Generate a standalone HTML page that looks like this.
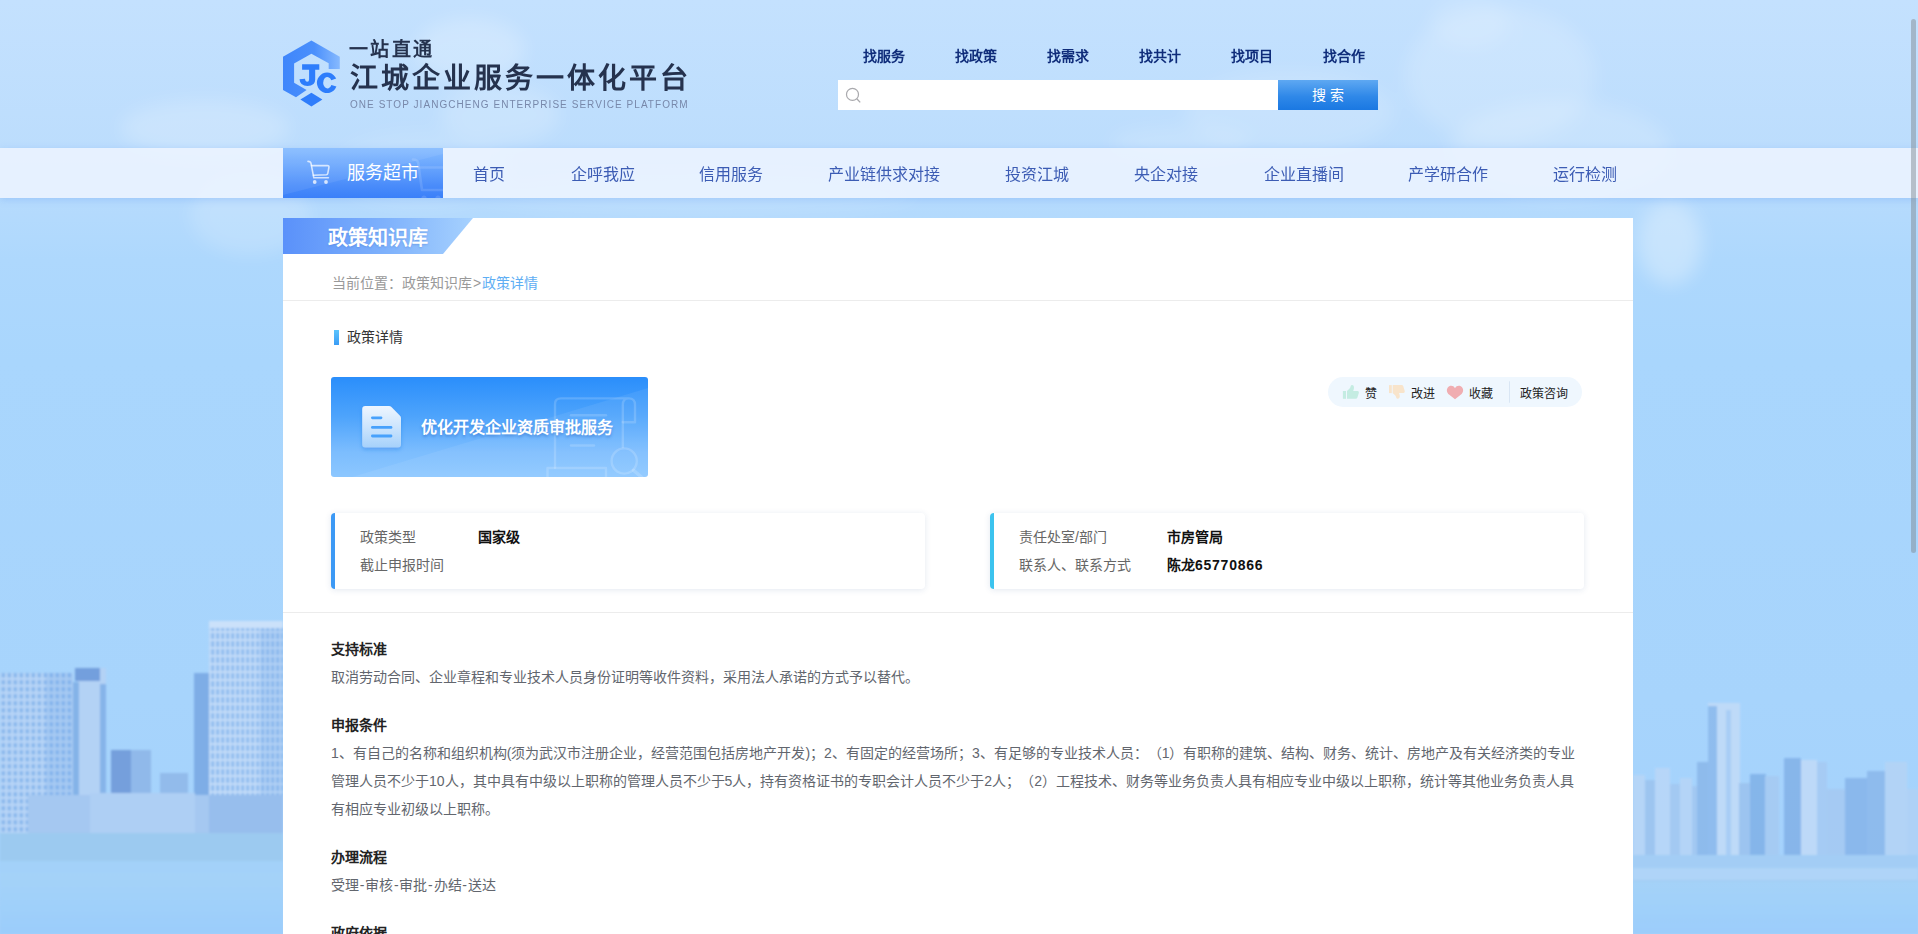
<!DOCTYPE html>
<html lang="zh-CN">
<head>
<meta charset="utf-8">
<title>政策详情</title>
<style>
*{box-sizing:border-box;margin:0;padding:0}
u{text-decoration:none;padding:0 0.75px}
html,body{width:1918px;height:934px;overflow:hidden}
body{font-family:"Liberation Sans",sans-serif;position:relative;color:#333;text-spacing-trim:space-all;
 background:linear-gradient(180deg,#c4e1fe 0px,#bcddfd 150px,#aed8fd 260px,#a9d6fd 360px,#a7d4fc 700px,#a3d1fc 934px)}
.abs{position:absolute}
#bg{position:absolute;left:0;top:0;width:1918px;height:934px}
/* header */
.t1{left:349px;top:38px;font-size:19px;line-height:24px;font-weight:bold;color:#25324e;letter-spacing:2.4px;white-space:nowrap}
.t2{left:350px;top:60px;font-size:28px;line-height:38px;font-weight:bold;color:#25324e;letter-spacing:3px;white-space:nowrap}
.t3{left:350px;top:99px;font-size:10px;line-height:12px;color:#7888aa;letter-spacing:1.05px;white-space:nowrap}
.toplink{top:46px;font-size:14px;line-height:20px;font-weight:bold;color:#0f2c7a;white-space:nowrap}
.search{left:838px;top:80px;width:440px;height:30px;background:#fff}
.sbtn{left:1278px;top:80px;width:100px;height:30px;background:linear-gradient(180deg,#5ea8f2 0%,#2f88e8 55%,#1a78e2 100%);color:#fff;font-size:14px;line-height:31px;text-align:center;letter-spacing:0}
/* nav */
.navbar{left:0;top:148px;width:1918px;height:50px;background:rgba(237,245,255,0.86);box-shadow:0 2px 7px rgba(90,150,240,0.28)}
.navbtn{left:283px;top:148px;width:160px;height:50px;background:linear-gradient(180deg,#86bcff 0%,#66a3fd 40%,#4a8cfa 75%,#3a80f9 100%);overflow:hidden}
.navbtn .txt{position:absolute;left:64px;top:12px;font-size:18px;line-height:26px;color:#fff;white-space:nowrap}
.nav{top:162px;font-size:16px;line-height:26px;color:#3c5cb4;white-space:nowrap}
/* panel */
.panel{left:283px;top:218px;width:1350px;height:720px;background:#fff}
.tab{left:283px;top:218px;width:190px;height:36px;background:linear-gradient(90deg,#5a91fa 0%,#7fb2fc 55%,#a6d1fe 100%);clip-path:polygon(0 0,190px 0,160px 36px,0 36px)}
.tabtxt{left:328px;top:224px;font-size:20px;line-height:28px;font-weight:bold;color:#fff;white-space:nowrap;text-shadow:0 1px 2px rgba(60,110,200,0.35)}
.crumb{left:332px;top:273px;font-size:14px;line-height:20px;color:#999;white-space:nowrap}
.crumb span{color:#5eaef4}
.hr{left:283px;width:1350px;height:1px;background:#ececec}
.secbar{left:334px;top:330px;width:5px;height:15px;background:linear-gradient(180deg,#5cc4fd,#3a9cf5)}
.sectxt{left:347px;top:327px;font-size:14px;line-height:20px;color:#333;white-space:nowrap}
.banner{left:331px;top:377px;width:317px;height:100px;border-radius:3px;overflow:hidden;background:linear-gradient(180deg,#2a8efb 0%,#4ea4fc 40%,#7cbdfe 75%,#8cc7ff 100%)}
.bantxt{left:421px;top:415px;font-size:16px;line-height:26px;font-weight:bold;color:#fff;white-space:nowrap;text-shadow:0 2px 3px rgba(30,90,190,0.45)}
.pill{left:1328px;top:377px;width:254px;height:30px;border-radius:15px;background:#eff7fe}
.ptxt{top:385px;font-size:12px;line-height:18px;color:#222;white-space:nowrap}
.card{top:513px;width:594px;height:76px;background:#fff;border-radius:4px;box-shadow:0 1px 6px rgba(40,80,140,0.13)}
.card i{position:absolute;left:0;top:0;width:4px;height:76px;border-radius:4px 0 0 4px}
.lab{font-size:14px;line-height:28px;color:#666;white-space:nowrap}
.val{font-size:14px;line-height:28px;color:#111;font-weight:bold;white-space:nowrap}
.h{left:331px;font-size:14px;line-height:28px;font-weight:bold;color:#222;white-space:nowrap}
.p{left:331px;font-size:14px;line-height:28px;color:#62666e;white-space:nowrap}
.scroll{left:1911px;top:19px;width:5px;height:534px;border-radius:3px;background:rgba(128,136,144,0.48)}
</style>
</head>
<body>
<svg id="bg" viewBox="0 0 1918 934">
 <defs>
  <filter id="cb" x="-20%" y="-20%" width="140%" height="140%"><feGaussianBlur stdDeviation="9"/></filter>
  <filter id="cb2" x="-20%" y="-20%" width="140%" height="140%"><feGaussianBlur stdDeviation="5"/></filter>
  <filter id="sb" x="-5%" y="-5%" width="110%" height="110%"><feGaussianBlur stdDeviation="0.9"/></filter>
  <pattern id="win" width="6" height="7" patternUnits="userSpaceOnUse"><rect width="6" height="7" fill="#b9d6f7"/><rect x="1.5" y="1" width="3.6" height="4.6" fill="#8ab8ed"/></pattern>
  <pattern id="win2" width="5" height="8" patternUnits="userSpaceOnUse"><rect width="5" height="8" fill="#c4ddf9"/><rect x="1.2" y="1" width="3" height="6" fill="#8fbcef"/></pattern>
  <linearGradient id="wat" x1="0" y1="0" x2="0" y2="1"><stop offset="0" stop-color="#a5d3f8"/><stop offset="1" stop-color="#9bcdfb"/></linearGradient>
 </defs>
 <!-- clouds -->
 <g fill="#fff" filter="url(#cb)">
  <ellipse cx="205" cy="128" rx="85" ry="28" opacity="0.20"/>
  <ellipse cx="250" cy="215" rx="60" ry="40" opacity="0.16"/>
  <ellipse cx="470" cy="50" rx="55" ry="32" opacity="0.22"/>
  <ellipse cx="500" cy="115" rx="60" ry="30" opacity="0.18"/>
  <ellipse cx="420" cy="170" rx="90" ry="40" opacity="0.10"/>
  <ellipse cx="1290" cy="112" rx="105" ry="40" opacity="0.14"/>
  <ellipse cx="1180" cy="142" rx="70" ry="16" opacity="0.14"/>
  <ellipse cx="1500" cy="75" rx="95" ry="68" opacity="0.16"/>
  <ellipse cx="1470" cy="22" rx="40" ry="26" opacity="0.12"/>
  <ellipse cx="1560" cy="150" rx="110" ry="50" opacity="0.16"/>
  <ellipse cx="1670" cy="243" rx="32" ry="42" opacity="0.30"/>
  <ellipse cx="700" cy="195" rx="220" ry="22" opacity="0.10"/>
 </g>
 <!-- left skyline -->
 <g filter="url(#sb)">
  <rect x="0" y="673" width="73" height="160" fill="url(#win)"/>
  <rect x="46" y="673" width="27" height="160" fill="rgba(110,165,230,0.22)"/>
  <rect x="78" y="668" width="28" height="130" fill="#b3d2f5"/>
  <rect x="73" y="682" width="6" height="116" fill="#84b3e8"/>
  <rect x="75" y="668" width="25" height="13" fill="#739fdd"/>
  <rect x="100" y="684" width="6" height="114" fill="#86b4e9"/>
  <rect x="111" y="750" width="20" height="46" fill="#749fdc"/>
  <rect x="131" y="750" width="20" height="46" fill="#90b9ea"/>
  <rect x="160" y="773" width="28" height="23" fill="#92bbeb"/>
  <rect x="194" y="673" width="16" height="160" fill="#7eade6"/>
  <rect x="209" y="621" width="74" height="214" fill="url(#win2)"/>
  <rect x="260" y="629" width="23" height="206" fill="rgba(110,165,230,0.20)"/>
  <rect x="209" y="621" width="74" height="7" fill="#cbe1fa"/>
  <rect x="28" y="795" width="255" height="40" fill="#a5c8f1"/>
  <rect x="90" y="793" width="105" height="40" fill="#aecff4"/>
  <rect x="209" y="795" width="74" height="40" fill="rgba(120,170,230,0.30)"/>
  <rect x="0" y="833" width="283" height="30" fill="#9ccaf0"/>
  <rect x="0" y="861" width="283" height="14" fill="#a3d1f9"/>
  <rect x="0" y="873" width="283" height="61" fill="url(#wat)"/>
 </g>
 <!-- right skyline -->
 <g filter="url(#sb)" opacity="0.85">
  <rect x="1633" y="775" width="12" height="82" fill="#b8d6f7"/>
  <rect x="1645" y="780" width="10" height="77" fill="#9cc3ef"/>
  <rect x="1655" y="768" width="15" height="89" fill="#bad7f8"/>
  <rect x="1670" y="784" width="10" height="73" fill="#a3c8f1"/>
  <rect x="1680" y="778" width="12" height="79" fill="#b7d5f7"/>
  <rect x="1692" y="786" width="6" height="71" fill="#a2c7f1"/>
  <rect x="1697" y="762" width="12" height="95" fill="#8ab7ea"/>
  <rect x="1708" y="703" width="32" height="154" fill="#c3dcf8"/>
  <rect x="1708" y="706" width="9" height="151" fill="#8cb9ec"/>
  <rect x="1726" y="710" width="5" height="147" fill="#a9cdf4"/>
  <rect x="1739" y="783" width="11" height="74" fill="#9bc2ee"/>
  <rect x="1750" y="774" width="16" height="83" fill="#80b1e8"/>
  <rect x="1765" y="776" width="14" height="81" fill="#a6caf2"/>
  <rect x="1784" y="758" width="17" height="99" fill="#82b1e8"/>
  <rect x="1801" y="760" width="16" height="97" fill="#c2dbf8"/>
  <rect x="1817" y="762" width="10" height="95" fill="#a6caf3"/>
  <rect x="1827" y="789" width="18" height="68" fill="#a5c9f2"/>
  <rect x="1845" y="778" width="22" height="79" fill="#86b4ea"/>
  <rect x="1867" y="771" width="18" height="86" fill="#8ab7eb"/>
  <rect x="1885" y="762" width="22" height="98" fill="#b5d4f6"/>
  <rect x="1907" y="789" width="11" height="68" fill="#b0d1f5"/>
  <rect x="1633" y="855" width="285" height="28" fill="#a3cdf4"/>
  <rect x="1633" y="868" width="285" height="12" fill="#b1d5f8"/>
  <rect x="1633" y="882" width="285" height="52" fill="url(#wat)"/>
 </g>
</svg>

<!-- logo -->
<svg class="abs" style="left:0;top:0" width="700" height="130" viewBox="0 0 700 130">
 <defs><linearGradient id="lg1" x1="0" y1="0" x2="1" y2="0"><stop offset="0" stop-color="#3f86fb"/><stop offset="0.55" stop-color="#4a8ffc"/><stop offset="1" stop-color="#86b9fe"/></linearGradient></defs>
 <path d="M311.4 40.5 L339.8 56.8 L339.8 69 L328.7 69 L328.7 63.3 L311.4 53.8 L294.1 63.5 L294.1 82.7 L306.6 90 L296 97.3 L283 90 L283 56.8 Z" fill="url(#lg1)"/>
 <path d="M311.4 92.7 L322.4 99.4 L311.4 106.4 L300.4 99.4 Z" fill="#2f7dfb"/>
 <path d="M302.1 64.3 H319.3 V69.8 H315.2 V79.5 Q315.2 86 307.5 86 Q300 86 299.5 79.3 L305 78.8 Q305.3 81.8 307.3 81.8 Q309.1 81.8 309.1 79.3 V69.8 H302.1 Z" fill="#2d7dfc"/>
 <path d="M336.2 78.6 A10.1 10.25 0 1 0 336.4 86.6 L331.4 85 A4.3 5.7 0 1 1 331.3 80.2 Z" fill="#2d7dfc"/>
</svg>
<div class="abs t1">一站直通</div>
<div class="abs t2">江城企业服务一体化平台</div>
<div class="abs t3">ONE STOP JIANGCHENG ENTERPRISE SERVICE PLATFORM</div>

<div class="abs toplink" style="left:863px">找服务</div>
<div class="abs toplink" style="left:955px">找政策</div>
<div class="abs toplink" style="left:1047px">找需求</div>
<div class="abs toplink" style="left:1139px">找共计</div>
<div class="abs toplink" style="left:1231px">找项目</div>
<div class="abs toplink" style="left:1323px">找合作</div>
<div class="abs search"><svg width="30" height="30" viewBox="0 0 30 30" style="position:absolute;left:0;top:0"><circle cx="14.5" cy="14.4" r="6" fill="none" stroke="#a9a9ad" stroke-width="1.2"/><path d="M18.8 18.8 L22.2 22.4" stroke="#a9a9ad" stroke-width="1.3" fill="none"/></svg></div>
<div class="abs sbtn">搜&nbsp;索</div>

<!-- nav -->
<div class="abs navbar"></div>
<div class="abs navbtn">
 <svg width="160" height="50" viewBox="0 0 160 50" style="position:absolute;left:0;top:0">
  <path d="M0 0 H160 V6 L0 47 Z" fill="rgba(255,255,255,0.07)"/>
  <g fill="none" stroke="rgba(255,255,255,0.72)" stroke-width="1.6" stroke-linejoin="round" stroke-linecap="round">
   <path d="M25 13.4 Q27.6 13.4 28 15.4 L30.8 29.8 H45.4"/>
   <path d="M28.6 17.6 H44.4 Q46.2 17.6 45.9 19.4 L44.8 25.4 Q44.6 26.6 43.2 26.7 L30.4 27.3"/>
  </g>
  <circle cx="31.7" cy="34" r="1.9" fill="rgba(255,255,255,0.75)"/><circle cx="43" cy="34" r="1.9" fill="rgba(255,255,255,0.75)"/>
  <g fill="none" stroke="rgba(255,255,255,0.13)" stroke-width="2.6" stroke-linejoin="round" stroke-linecap="round">
   <path d="M130 11.5 Q134.5 11.5 135.2 15 L139 42 H162"/><path d="M136 19.5 H162"/>
  </g>
  <circle cx="141" cy="50" r="2.6" fill="rgba(255,255,255,0.13)"/><circle cx="155" cy="50" r="2.6" fill="rgba(255,255,255,0.13)"/>
 </svg>
 <div class="txt">服务超市</div>
</div>
<div class="abs nav" style="left:473px">首页</div>
<div class="abs nav" style="left:571px">企呼我应</div>
<div class="abs nav" style="left:699px">信用服务</div>
<div class="abs nav" style="left:828px">产业链供求对接</div>
<div class="abs nav" style="left:1005px">投资江城</div>
<div class="abs nav" style="left:1134px">央企对接</div>
<div class="abs nav" style="left:1264px">企业直播间</div>
<div class="abs nav" style="left:1408px">产学研合作</div>
<div class="abs nav" style="left:1553px">运行检测</div>

<!-- panel -->
<div class="abs panel"></div>
<div class="abs tab"></div>
<div class="abs tabtxt">政策知识库</div>
<div class="abs crumb">当前位置：政策知识库<b style="font-weight:normal;padding:0 1px 0 1px">&gt;</b><span>政策详情</span></div>
<div class="abs hr" style="top:300px"></div>
<div class="abs secbar"></div>
<div class="abs sectxt">政策详情</div>

<div class="abs banner" id="banner"><svg width="317" height="100" viewBox="331 377 317 100" style="position:absolute;left:0;top:0">
 <defs><linearGradient id="dg" x1="0" y1="0" x2="0" y2="1"><stop offset="0" stop-color="#eef6ff"/><stop offset="0.5" stop-color="#cde5fd"/><stop offset="1" stop-color="#a6d1fb"/></linearGradient>
 <filter id="ds" x="-30%" y="-30%" width="160%" height="170%"><feDropShadow dx="0" dy="2" stdDeviation="2" flood-color="#1c6fe0" flood-opacity="0.35"/></filter></defs>
 <path d="M352 477 L648 388 V477 Z" fill="rgba(255,255,255,0.07)"/>
 <g fill="none" stroke="rgba(255,255,255,0.17)" stroke-width="2.4" stroke-linejoin="round" stroke-linecap="round">
  <path d="M555 467.8 V404 Q555 398.4 561 398.4 H628.8 Q635 398.4 635 405 V422.3 H622.8 V405 Q622.8 398.4 628.8 398.4"/>
  <path d="M622.8 422 V447"/>
  <path d="M571 415.3 H606"/><path d="M571 445.5 H594"/>
  <path d="M547.5 478 V468 H606 V478"/>
  <circle cx="624.2" cy="461" r="12.6"/>
  <path d="M633.6 470.4 L646 481" stroke-width="3.4"/>
 </g>
 <path d="M365.4 406 H389 Q390.4 406 391.4 407 L400 415.8 Q401 416.8 401 418.2 V444.2 Q401 447.4 397.8 447.4 H365.4 Q362.2 447.4 362.2 444.2 V409.2 Q362.2 406 365.4 406 Z" fill="url(#dg)" filter="url(#ds)"/>
 <g stroke="#47a1fc" stroke-width="2.8" stroke-linecap="round"><path d="M372.4 417.8 H381"/><path d="M372.4 427.4 H391"/><path d="M372.4 436 H391"/></g>
</svg></div>
<div class="abs bantxt">优化开发企业资质审批服务</div>

<div class="abs pill" id="pill"></div>
<svg class="abs" style="left:1328px;top:377px" width="254" height="30" viewBox="1328 377 254 30">
 <g fill="#c4ece2"><rect x="1342.9" y="391" width="3.1" height="7.8"/>
  <path d="M1347 391 L1349.6 388.6 Q1350.6 387.2 1350.8 385.8 Q1351.2 384.8 1352.4 385 Q1354 385.4 1354 387.4 Q1354 389.2 1353.2 391 H1357.6 Q1359.2 391.2 1358.9 392.8 L1357.4 397.6 Q1357 398.8 1355.6 398.8 H1347 Z"/></g>
 <g fill="#f8e4cb"><rect x="1389" y="385.1" width="2.8" height="8"/>
  <path d="M1392.7 393.1 L1395.3 395.4 Q1396.2 396.8 1396.4 398 Q1396.8 399 1398 398.8 Q1399.8 398.4 1399.8 396.4 Q1399.8 394.8 1399 393.1 H1403.4 Q1405 392.9 1404.8 391.3 L1403.3 386.3 Q1402.9 385.1 1401.5 385.1 H1392.7 Z"/></g>
 <path fill="#f0adb1" d="M1455 388.2 C1453.8 385.4 1449.6 384.9 1447.8 387.4 C1446 389.9 1447 392.6 1449 394.6 L1455 399.2 L1461 394.6 C1463 392.6 1464 389.9 1462.2 387.4 C1460.4 384.9 1456.2 385.4 1455 388.2 Z"/>
 <rect x="1509" y="381.3" width="1" height="21.4" fill="#d9e6f4"/>
</svg>
<div class="abs ptxt" style="left:1365px">赞</div>
<div class="abs ptxt" style="left:1411px">改进</div>
<div class="abs ptxt" style="left:1469px">收藏</div>
<div class="abs ptxt" style="left:1520px">政策咨询</div>

<div class="abs card" style="left:331px"><i style="background:#3c99f5"></i></div>
<div class="abs card" style="left:990px"><i style="background:#3cc3ee"></i></div>
<div class="abs lab" style="left:360px;top:523px">政策类型</div>
<div class="abs val" style="left:478px;top:523px">国家级</div>
<div class="abs lab" style="left:360px;top:551px">截止申报时间</div>
<div class="abs lab" style="left:1019px;top:523px">责任处室/部门</div>
<div class="abs val" style="left:1167px;top:523px">市房管局</div>
<div class="abs lab" style="left:1019px;top:551px">联系人、联系方式</div>
<div class="abs val" style="left:1167px;top:551px">陈龙<span style="letter-spacing:0.75px">65770866</span></div>

<div class="abs hr" style="top:612px"></div>
<div class="abs h" style="top:635px">支持标准</div>
<div class="abs p" style="top:663px">取消劳动合同、企业章程和专业技术人员身份证明等收件资料，采用法人承诺的方式予以替代。</div>
<div class="abs h" style="top:711px">申报条件</div>
<div class="abs p" style="top:739px">1、有自己的名称和组织机构(须为武汉市注册企业，经营范围包括房地产开发)；2、有固定的经营场所；3、有足够的专业技术人员：（1）有职称的建筑、结构、财务、统计、房地产及有关经济类的专业<br>管理人员不少于10人，其中具有中级以上职称的管理人员不少于5人，持有资格证书的专职会计人员不少于2人；（2）工程技术、财务等业务负责人具有相应专业中级以上职称，统计等其他业务负责人具<br>有相应专业初级以上职称。</div>
<div class="abs h" style="top:843px">办理流程</div>
<div class="abs p" style="top:871px">受理<u>-</u>审核<u>-</u>审批<u>-</u>办结<u>-</u>送达</div>
<div class="abs h" style="top:919px">政府依据</div>

<div class="abs scroll"></div>
</body>
</html>
